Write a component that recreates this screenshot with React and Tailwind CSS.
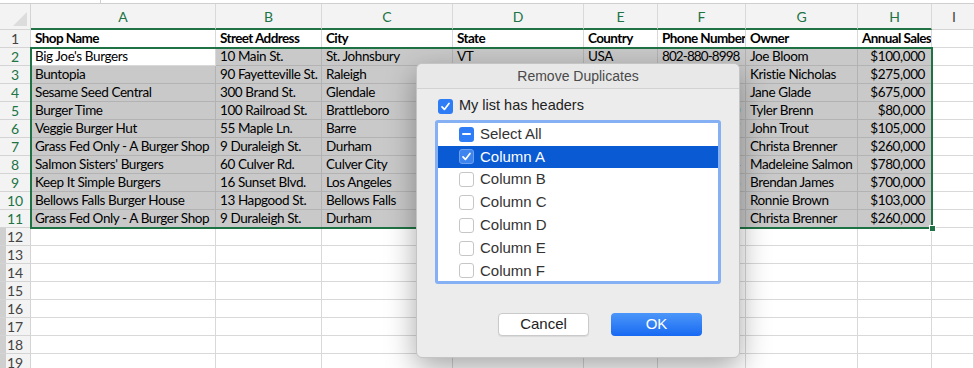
import React from 'react'

const COLS = ['A', 'B', 'C', 'D', 'E', 'F', 'G', 'H']
const GRID = 'grid grid-cols-[31px_185px_106px_131px_131px_74px_88px_112px_74px_1fr]'

const HEAD = ['Shop Name', 'Street Address', 'City', 'State', 'Country', 'Phone Number', 'Owner', 'Annual Sales']
const ROWS = [
  ["Big Joe's Burgers", '10 Main St.', 'St. Johnsbury', 'VT', 'USA', '802-880-8998', 'Joe Bloom', '$100,000'],
  ['Buntopia', '90 Fayetteville St.', 'Raleigh', 'NC', 'USA', '919-555-0142', 'Kristie Nicholas', '$275,000'],
  ['Sesame Seed Central', '300 Brand St.', 'Glendale', 'CA', 'USA', '818-555-0199', 'Jane Glade', '$675,000'],
  ['Burger Time', '100 Railroad St.', 'Brattleboro', 'VT', 'USA', '802-555-0110', 'Tyler Brenn', '$80,000'],
  ['Veggie Burger Hut', '55 Maple Ln.', 'Barre', 'VT', 'USA', '802-555-0177', 'John Trout', '$105,000'],
  ['Grass Fed Only - A Burger Shop', '9 Duraleigh St.', 'Durham', 'NC', 'USA', '919-555-0123', 'Christa Brenner', '$260,000'],
  ["Salmon Sisters' Burgers", '60 Culver Rd.', 'Culver City', 'CA', 'USA', '310-555-0154', 'Madeleine Salmon', '$780,000'],
  ['Keep It Simple Burgers', '16 Sunset Blvd.', 'Los Angeles', 'CA', 'USA', '213-555-0166', 'Brendan James', '$700,000'],
  ['Bellows Falls Burger House', '13 Hapgood St.', 'Bellows Falls', 'VT', 'USA', '802-555-0188', 'Ronnie Brown', '$103,000'],
  ['Grass Fed Only - A Burger Shop', '9 Duraleigh St.', 'Durham', 'NC', 'USA', '919-555-0123', 'Christa Brenner', '$260,000'],
]

function RowHeader({ n, selected }) {
  return (
    <div
      className={`h-[18px] border-b border-r border-[#d4d4d4] bg-[#f3f3f3] flex items-center justify-center text-[14px] leading-none ${
        selected ? 'text-[#217346]' : 'text-[#444]'
      } ${n >= 12 ? 'shadow-[inset_6px_0_0_#cfcfcf]' : ''}`}
    >
      {n}
    </div>
  )
}

function Cell({ children, shaded, right, bold, tight }) {
  const track = bold ? 'font-bold tracking-[-0.6px]' : tight ? 'tracking-[-0.9px]' : 'tracking-[-0.4px]'
  return (
    <div
      className={`h-[18px] border-b border-r flex items-center overflow-hidden whitespace-nowrap text-[13.5px] leading-none text-black ${
        shaded ? 'bg-[#c9c9c9] border-[#b3b3b3]' : 'bg-white border-[#d9d9d9]'
      } ${right ? 'justify-end pr-[6px]' : 'pl-[4px]'} ${track}`}
    >
      {children}
    </div>
  )
}

function Check({ state, onBlue }) {
  if (state === 'none') {
    return <span className="w-[15px] h-[15px] rounded-[3px] border border-[#c6c6c6] bg-white shrink-0" />
  }
  return (
    <span
      className={`w-[15px] h-[15px] rounded-[3px] flex items-center justify-center shrink-0 ${
        onBlue ? 'bg-[#3d84ee] border border-[#6da0f0]' : 'bg-[#2f7df6]'
      }`}
    >
      {state === 'check' ? (
        <svg width="11" height="11" viewBox="0 0 11 11">
          <polyline points="2,5.8 4.4,8.4 9,2.4" fill="none" stroke="white" strokeWidth="1.7" strokeLinecap="round" strokeLinejoin="round" />
        </svg>
      ) : (
        <span className="w-[9px] h-[2px] bg-white rounded" />
      )}
    </span>
  )
}

function Dialog() {
  const items = [
    { label: 'Select All', state: 'dash' },
    { label: 'Column A', state: 'check', active: true },
    { label: 'Column B', state: 'none' },
    { label: 'Column C', state: 'none' },
    { label: 'Column D', state: 'none' },
    { label: 'Column E', state: 'none' },
    { label: 'Column F', state: 'none' },
  ]
  return (
    <div className="absolute left-[416px] top-[63px] w-[324px] h-[295px] rounded-[6px] bg-[#ececec] border border-[#c4c4c4] shadow-[0_10px_30px_rgba(0,0,0,0.35)] font-['Liberation_Sans',Arial,sans-serif] flex flex-col">
      <div className="h-[25px] border-b border-[#d2d2d2] bg-[#e8e8e8] rounded-t-[6px] flex items-center justify-center text-[14px] text-[#4a4a4a]">
        Remove Duplicates
      </div>
      <div className="flex items-center gap-[6px] pl-[21px] mt-[7px] text-[14.5px] text-[#222]">
        <Check state="check" />
        <span className="-mt-[1px]">My list has headers</span>
      </div>
      <div className="ml-[18px] mt-[3px] w-[286px] h-[164px] rounded-[3px] border-[3px] border-[#85b0f3] bg-white overflow-hidden">
        {items.map(it => (
          <div
            key={it.label}
            className={`h-[22.8px] flex items-center gap-[6px] pl-[21px] text-[15px] ${
              it.active ? 'bg-[#0a5ad4] text-white' : 'text-[#333]'
            }`}
          >
            <Check state={it.state} onBlue={it.active} />
            <span>{it.label}</span>
          </div>
        ))}
      </div>
      <div className="flex gap-[22px] pl-[81px] mt-[29px]">
        <div className="w-[91px] h-[23px] rounded-[4px] bg-white border border-[#cacaca] shadow-[0_1px_1px_rgba(0,0,0,0.08)] flex items-center justify-center text-[15px] text-[#222]">
          Cancel
        </div>
        <div className="w-[91px] h-[23px] rounded-[4px] bg-gradient-to-b from-[#4b96f9] to-[#1769f2] flex items-center justify-center text-[15px] text-white">
          OK
        </div>
      </div>
    </div>
  )
}

export default function App() {
  return (
    <div className="relative w-[974px] h-[368px] overflow-hidden bg-white font-[Lato,'Open_Sans',sans-serif]">
      {/* formula bar edge */}
      <div className="h-[4px] border-b border-[#cfcfcf] bg-white">
        <div className="w-[101px] h-[3px] border-r border-[#cfcfcf]" />
      </div>

      {/* column headers */}
      <div className={GRID}>
        <div className="h-[26px] bg-[#f3f3f3] border-r border-b border-[#d4d4d4] relative overflow-hidden">
          <div className="absolute right-[3px] bottom-[3px] w-0 h-0 border-l-[14px] border-l-transparent border-b-[14px] border-b-[#dcdcdc]" />
        </div>
        {COLS.map(c => (
          <div key={c} className="h-[26px] bg-[#f3f3f3] border-r border-[#d9d9d9] border-b-2 border-b-[#217346] flex items-center justify-center text-[14px] text-[#217346]">
            {c}
          </div>
        ))}
        <div className="h-[26px] bg-[#f3f3f3] border-b border-[#d4d4d4] flex items-center justify-center text-[14px] text-[#444] pl-[2px]">
          I
        </div>
      </div>

      {/* row 1 */}
      <div className={GRID}>
        <RowHeader n={1} />
        {HEAD.map(h => <Cell key={h} bold>{h}</Cell>)}
        <Cell />
      </div>

      {ROWS.map((r, ri) => (
        <div key={ri} className={GRID}>
          <RowHeader n={ri + 2} selected />
          {r.map((v, ci) => (
            <Cell key={ci} shaded={!(ri === 0 && ci === 0)} right={ci === 7} tight={ci === 5}>{v}</Cell>
          ))}
          <Cell />
        </div>
      ))}

      {[12, 13, 14, 15, 16, 17, 18, 19].map(n => (
        <div key={n} className={GRID}>
          <RowHeader n={n} />
          {COLS.map(c => <Cell key={c} />)}
          <Cell />
        </div>
      ))}

      {/* selection outline */}
      <div className="absolute left-[30px] top-[47px] w-[903px] h-[182px] border-2 border-[#1f7244] pointer-events-none" />
      <div className="absolute left-[929px] top-[225px] w-[7px] h-[7px] bg-[#1f7244] border border-white" />

      <Dialog />
    </div>
  )
}
